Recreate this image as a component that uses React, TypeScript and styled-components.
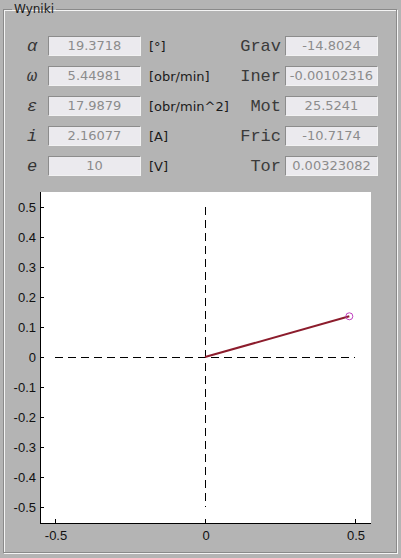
import React from "react";
import styled, { createGlobalStyle } from "styled-components";

const GlobalStyle = createGlobalStyle`
  html, body {
    margin: 0;
    padding: 0;
    background: #b4b4b4;
  }
  body {
    width: 401px;
    height: 558px;
    overflow: hidden;
    font-family: "DejaVu Sans", sans-serif;
  }
`;

type Row = {
  sym: string;
  value: string;
  unit: string;
  name: string;
  other: string;
};

const rows: Row[] = [
  { sym: "α", value: "19.3718", unit: "[°]", name: "Grav", other: "-14.8024" },
  { sym: "ω", value: "5.44981", unit: "[obr/min]", name: "Iner", other: "-0.00102316" },
  { sym: "ε", value: "17.9879", unit: "[obr/min^2]", name: "Mot", other: "25.5241" },
  { sym: "i", value: "2.16077", unit: "[A]", name: "Fric", other: "-10.7174" },
  { sym: "e", value: "10", unit: "[V]", name: "Tor", other: "0.00323082" },
];

// point at the end of the red arm, in plot units
const tip = { x: 0.4811, y: 0.1357 };

const Frame = styled.fieldset`
  margin: 2px 4px 0 3px;
  padding: 20px 18px 4px 0;
  border: 1px solid #8a8a8a;
  box-shadow: inset 1px 1px 0 #f4f4f4, 1px 1px 0 #f4f4f4;
  min-inline-size: 0;
  height: 551px;
  box-sizing: border-box;
`;

const Title = styled.legend`
  margin-left: 8px;
  padding: 0 2px;
  font-size: 12px;
  line-height: 14px;
  color: #1a1a1a;
`;

const Rows = styled.div`
  display: flex;
  flex-direction: column;
  gap: 10px;
`;

const RowLine = styled.div`
  display: flex;
  align-items: center;
  height: 20px;
`;

const Symbol = styled.span`
  width: 20px;
  margin-left: 18px;
  text-align: center;
  font-family: "Liberation Mono", monospace;
  font-style: italic;
  font-size: 17px;
  color: #333;
`;

const Field = styled.div<{ $gap: number }>`
  width: 93px;
  height: 20px;
  margin-left: ${(p) => p.$gap}px;
  box-sizing: border-box;
  border-top: 1px solid #8c8c8c;
  border-left: 1px solid #8c8c8c;
  border-bottom: 1px solid #f2f2f2;
  border-right: 1px solid #f2f2f2;
  background: #ebeaee;
  color: #8c8c8c;
  font-size: 13px;
  line-height: 18px;
  text-align: center;
  white-space: nowrap;
`;

const Unit = styled.span`
  flex: 1;
  margin-left: 8px;
  font-size: 13px;
  color: #1a1a1a;
  white-space: nowrap;
`;

const Name = styled.span`
  margin-right: 4px;
  font-family: "Liberation Mono", monospace;
  font-size: 17px;
  color: #3a3a3a;
`;

const Chart = styled.svg`
  display: block;
  margin-top: 16px;
  font-family: "Liberation Sans", sans-serif;
  font-size: 13px;
`;

const px = (v: number) => 201 + 300 * v;
const py = (v: number) => 165 - 300 * v;

const yTicks = [0.5, 0.4, 0.3, 0.2, 0.1, 0, -0.1, -0.2, -0.3, -0.4, -0.5];
const xTicks = [-0.5, 0, 0.5];

const Plot = () => (
  <Chart width={378} height={350}>
    <rect x={36} y={0} width={331} height={331} fill="#fff" />
    <line x1={36.5} y1={0} x2={36.5} y2={331.5} stroke="#000" />
    <line x1={36} y1={331.5} x2={367} y2={331.5} stroke="#000" />
    {yTicks.map((t) => (
      <g key={t}>
        <line x1={37} y1={py(t) + 0.5} x2={40} y2={py(t) + 0.5} stroke="#000" />
        <text x={32} y={py(t) + 5} textAnchor="end" fill="#111">
          {t === 0 ? "0" : String(t)}
        </text>
      </g>
    ))}
    {xTicks.map((t) => (
      <g key={t}>
        <line x1={px(t) + 0.5} y1={327} x2={px(t) + 0.5} y2={331} stroke="#000" />
        <text x={px(t) + 1} y={348} textAnchor="middle" fill="#111">
          {t === 0 ? "0" : String(t)}
        </text>
      </g>
    ))}
    <line
      x1={px(-0.5)}
      y1={165.5}
      x2={px(0.5)}
      y2={165.5}
      stroke="#000"
      strokeDasharray="8 5"
    />
    <line
      x1={201.5}
      y1={py(0.5)}
      x2={201.5}
      y2={py(-0.5)}
      stroke="#000"
      strokeDasharray="8 5"
    />
    <line
      x1={px(0)}
      y1={py(0)}
      x2={px(tip.x)}
      y2={py(tip.y)}
      stroke="#8c1c2c"
      strokeWidth={2}
    />
    <circle cx={px(tip.x)} cy={py(tip.y)} r={3.5} fill="none" stroke="#c040c0" />
  </Chart>
);

const App = () => (
  <>
    <GlobalStyle />
    <Frame>
      <Title>Wyniki</Title>
      <Rows>
        {rows.map((r) => (
          <RowLine key={r.name}>
            <Symbol>{r.sym}</Symbol>
            <Field $gap={6}>{r.value}</Field>
            <Unit>{r.unit}</Unit>
            <Name>{r.name}</Name>
            <Field $gap={0}>{r.other}</Field>
          </RowLine>
        ))}
      </Rows>
      <Plot />
    </Frame>
  </>
);

export default App;
